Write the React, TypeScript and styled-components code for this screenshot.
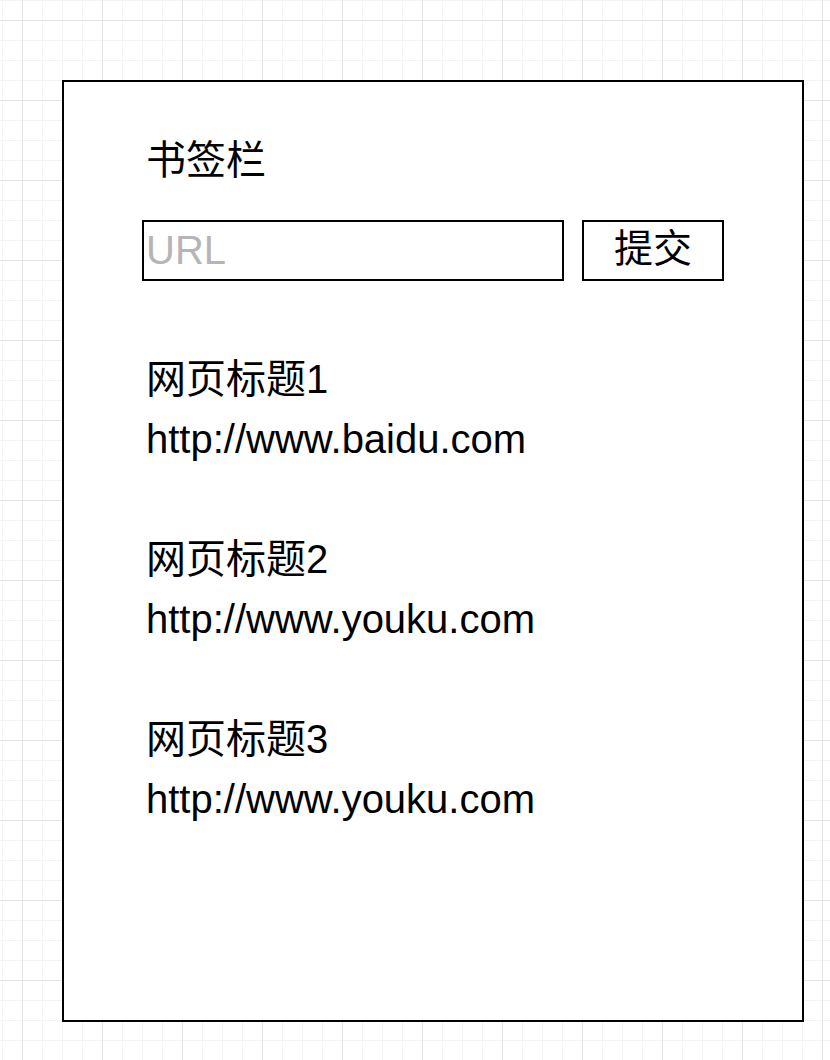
import React from "react";
import styled, { createGlobalStyle } from "styled-components";

const GlobalStyle = createGlobalStyle`
  html, body {
    margin: 0;
    padding: 0;
  }
  body {
    background-color: #ffffff;
    background-image:
      linear-gradient(to right, #e4e4e4 1px, transparent 1px),
      linear-gradient(to bottom, #e4e4e4 1px, transparent 1px),
      linear-gradient(to right, #f3f3f3 1px, transparent 1px),
      linear-gradient(to bottom, #f3f3f3 1px, transparent 1px);
    background-size: 80px 80px, 80px 80px, 20px 20px, 20px 20px;
    background-position: 22px 20px, 22px 20px, 2px 0, 2px 0;
    min-height: 1060px;
    font-family: "Liberation Sans", "Noto Sans CJK SC", sans-serif;
    color: #000;
  }
`;

const Page = styled.div`
  padding: 80px 0 38px 62px;
`;

const Card = styled.section`
  box-sizing: border-box;
  width: 742px;
  height: 942px;
  border: 2px solid #000;
  background: #fff;
  padding: 48px 78px 0;
  display: flex;
  flex-direction: column;
`;

const Title = styled.h1`
  margin: 0 0 30px;
  padding-left: 4px;
  font-size: 40px;
  font-weight: 400;
  line-height: 60px;
`;

const Form = styled.form`
  display: flex;
  gap: 18px;
  height: 61px;
  margin: 0;
`;

const UrlInput = styled.input`
  box-sizing: border-box;
  width: 422px;
  height: 61px;
  border: 2px solid #000;
  border-radius: 0;
  padding: 0 2px;
  margin: 0;
  font-family: "Liberation Sans", "Noto Sans CJK SC", sans-serif;
  font-size: 40px;
  color: #000;
  outline: none;
  &::placeholder {
    color: #b5b5b5;
  }
`;

const SubmitButton = styled.button`
  box-sizing: border-box;
  width: 142px;
  height: 61px;
  border: 2px solid #000;
  border-radius: 0;
  background: #fff;
  padding: 0 0 5px;
  margin: 0;
  font-family: "Liberation Sans", "Noto Sans CJK SC", sans-serif;
  font-size: 39px;
  line-height: 1;
  color: #000;
  cursor: pointer;
`;

const List = styled.ul`
  list-style: none;
  margin: 68px 0 0;
  padding: 0 0 0 4px;
`;

const Item = styled.li`
  margin-bottom: 60px;
`;

const Line = styled.div`
  font-size: 40px;
  line-height: 60px;
  white-space: nowrap;
`;

const bookmarks = [
  { title: "网页标题1", url: "http://www.baidu.com" },
  { title: "网页标题2", url: "http://www.youku.com" },
  { title: "网页标题3", url: "http://www.youku.com" },
];

export default function App() {
  return (
    <>
      <GlobalStyle />
      <Page>
        <Card>
          <Title>书签栏</Title>
          <Form onSubmit={(e) => e.preventDefault()}>
            <UrlInput placeholder="URL" />
            <SubmitButton type="submit">提交</SubmitButton>
          </Form>
          <List>
            {bookmarks.map((b) => (
              <Item key={b.title}>
                <Line>{b.title}</Line>
                <Line>{b.url}</Line>
              </Item>
            ))}
          </List>
        </Card>
      </Page>
    </>
  );
}
